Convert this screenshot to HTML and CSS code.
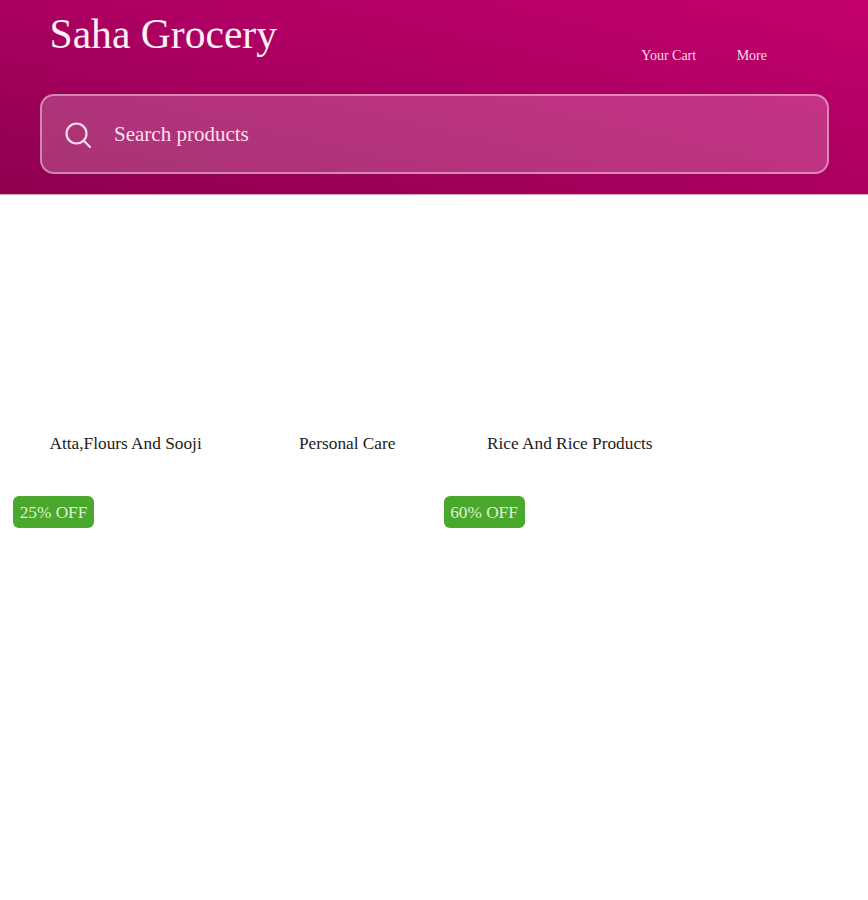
FILE: index.html
```html
<!DOCTYPE html>
<html lang="en">
<head>
<meta charset="utf-8">
<title>Saha Grocery</title>
<link rel="stylesheet" href="styles.css">
</head>
<body>
<header class="header">
  <div class="top">
    <h1 class="brand">Saha Grocery</h1>
    <nav class="nav">
      <a class="nav-link">Your Cart</a>
      <a class="nav-link">More</a>
    </nav>
  </div>
  <div class="search">
    <svg class="search-icon" viewBox="0 0 28 28" width="28" height="28" fill="none" stroke="currentColor" stroke-width="2.2" stroke-linecap="round">
      <circle cx="12.5" cy="12.5" r="10"/>
      <path d="M19.8 19.8 L26 26"/>
    </svg>
    <span class="search-text">Search products</span>
  </div>
</header>
<main>
  <section class="categories">
    <div class="category cat-a">Atta,Flours And Sooji</div>
    <div class="category cat-b">Personal Care</div>
    <div class="category cat-c">Rice And Rice Products</div>
  </section>
  <section class="offers">
    <div class="offer"><span class="badge">25% OFF</span></div>
    <div class="offer"><span class="badge">60% OFF</span></div>
  </section>
</main>
</body>
</html>
```
FILE: styles.css
```css
* { box-sizing: border-box; }
html, body { margin: 0; padding: 0; }
body {
  background: #fff;
  font-family: "Liberation Serif", "Times New Roman", serif;
  color: #111;
  height: 900px;
  overflow: hidden;
}
.header {
  height: 195px;
  padding: 0 39px 0 40px;
  background: linear-gradient(193deg, #c4006f 0%, #ab0061 50%, #8e004f 100%);
  color: #fff;
  border-bottom: 1px solid #d9a9c1;
}
.top {
  display: flex;
  justify-content: space-between;
  height: 94px;
  padding-left: 9.5px;
}
.brand {
  margin: 11px 0 0;
  font-size: 41.6px;
  line-height: 46px;
  font-weight: 400;
  color: #fdf0f6;
}
.nav {
  display: flex;
  gap: 40.5px;
  padding: 48px 62px 0 0;
  font-size: 14px;
  line-height: 16px;
}
.nav-link { color: #f9dcea; }
.search {
  display: flex;
  align-items: center;
  gap: 22px;
  height: 80px;
  padding: 0 22px;
  border: 2px solid rgba(255, 255, 255, 0.42);
  border-radius: 14px;
  background: rgba(255, 255, 255, 0.2);
}
.search-icon { color: #fadcea; flex: none; margin-top: 1px; }
.search-text { font-size: 21px; color: #fde0ee; }
.categories {
  display: flex;
  padding: 239px 0 0 49.5px;
  font-size: 17.3px;
  line-height: 20px;
  color: #222;
}
.cat-a { width: 249.5px; }
.cat-b { width: 188px; }
.offers {
  display: grid;
  grid-template-columns: 430.5px 431px;
  padding: 42px 0 0 13px;
}
.badge {
  display: inline-block;
  width: 81px;
  height: 32px;
  border-radius: 6px;
  background: #4aa82c;
  color: #dff2d6;
  font-size: 17.3px;
  line-height: 33px;
  text-align: center;
}
```
